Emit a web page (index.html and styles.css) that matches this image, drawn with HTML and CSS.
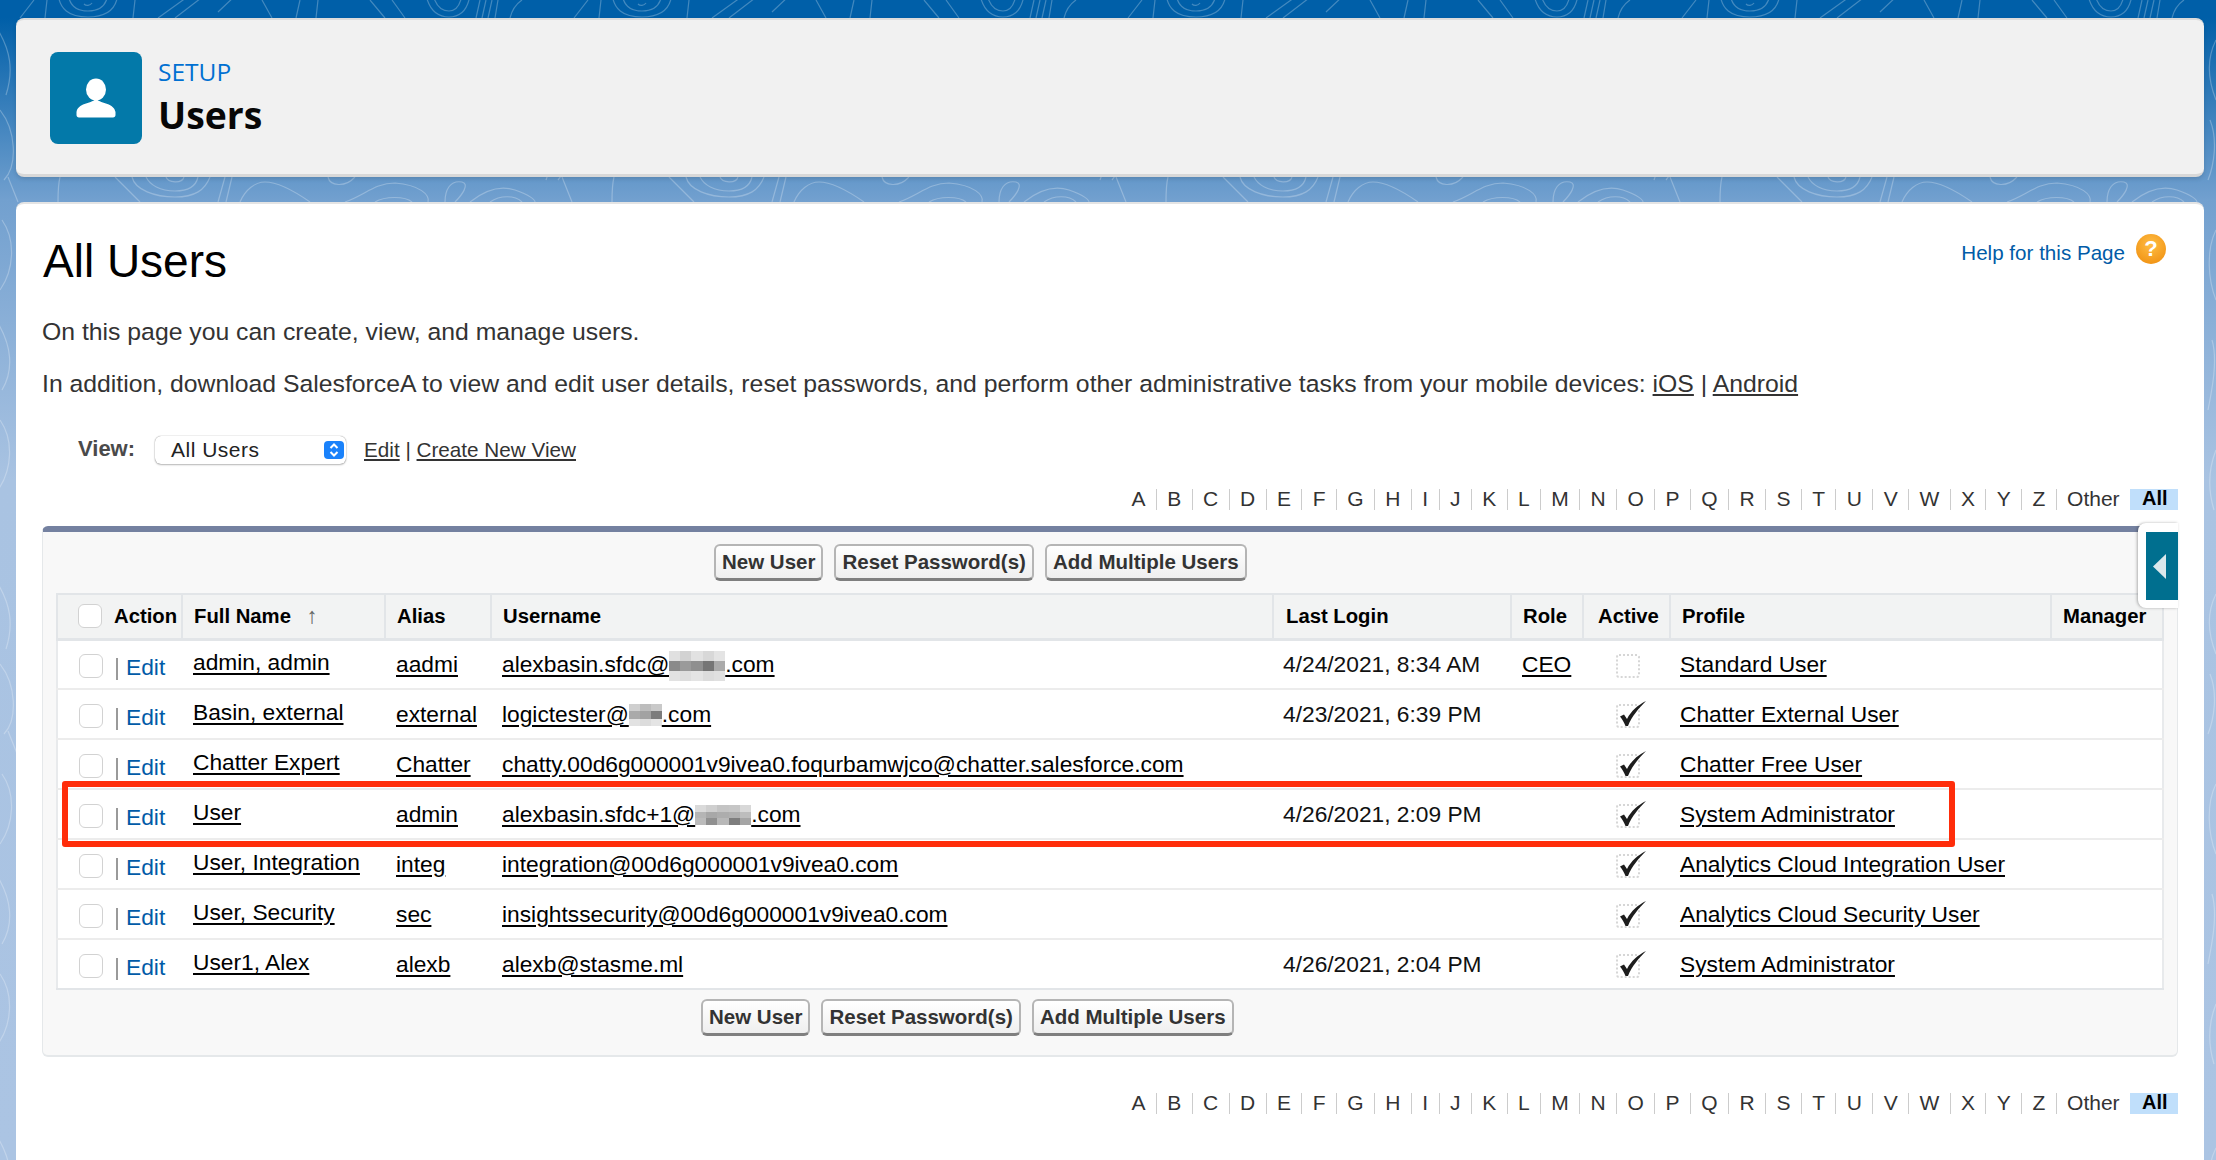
FILE: index.html
```html
<!DOCTYPE html>
<html lang="en">
<head>
    <meta charset="UTF-8" />
    <title>Users - Setup</title>
    <link rel="stylesheet" href="styles.css">
</head>
<body>

<svg class="bg-lines" aria-hidden="true">
    <defs>
        <pattern id="topo" width="554" height="554" patternUnits="userSpaceOnUse">
            <g fill="none" stroke="#fff" stroke-width="1.2">
                <path d="M58 -10C58 10 70 17 88 17C106 17 118 10 118 -10M68 -10C68 5 76 11 88 11C100 11 108 5 108 -10M84 4C86 6 90 6 92 3"/>
                <path d="M135 0L133 18M158 18L190 -5M175 18L205 -5M218 12L236 -5M45 18L47 0M262 0L272 18M300 0L296 18M318 0L316 18"/>
                <path d="M425 -10C428 10 438 17 449 17C462 17 468 8 470 -5M433 -5C436 6 442 11 449 11C456 11 460 6 462 -5M370 0L385 18M392 0L405 18"/>
                <path d="M476 18L480 0M482 18L486 0M488 18L492 0M495 18L498 0M510 18C512 10 516 4 522 0M20 18L34 0"/>
                <path d="M132 177C135 190 155 197 175 197C195 197 205 190 210 177M146 177C150 185 160 191 175 191C188 191 196 186 198 177M166 177C168 183 182 184 184 177"/>
                <path d="M225 177L218 202M232 177L226 202M240 202C245 190 255 182 265 182C280 182 300 195 310 202M60 177C58 185 58 195 58 202"/>
                <path d="M328 177C330 186 345 188 355 177M345 202C365 195 375 183 395 183C420 185 430 195 428 202M375 202C385 196 405 196 412 202"/>
                <path d="M445 202C445 190 450 180 462 182C470 184 462 195 455 202M470 202C485 190 500 185 515 190C530 195 535 200 535 202M490 202C500 195 515 195 522 202M115 177L140 202M8 177L18 202"/>
                <path d="M-2 30C10 50 14 70 6 95M0 110C16 130 18 165 4 180M2 220C16 240 14 270 0 290M-4 320C12 345 14 370 2 390M0 420C14 440 12 470 -2 490"/>
                <path d="M554 40C544 60 546 80 554 100M548 120C556 140 552 165 546 180M554 230C544 250 546 280 554 300M550 340C556 360 550 390 546 410M554 450C546 470 546 490 552 510"/>
            </g>
        </pattern>
        <symbol id="mark-box" viewBox="0 0 32 30">
            <rect x="1" y="6" width="22" height="22" rx="2" fill="none" stroke="#d6d6d6" stroke-width="2" stroke-dasharray="2 2"/>
        </symbol>
        <symbol id="mark-check" viewBox="0 0 32 30">
            <rect x="1" y="6" width="22" height="22" rx="2" fill="none" stroke="#d6d6d6" stroke-width="2" stroke-dasharray="2 2"/>
            <path d="M4 17.5L8 15.5L11 20C15 12 22 6 30 2C23 9 16 17 12 27H9.5C8 23 6 20 4 17.5Z" fill="#1c1c1c"/>
        </symbol>
    </defs>
    <rect width="100%" height="100%" fill="url(#topo)" opacity="0.26"/>
</svg>

<header class="setup-header">
    <div class="setup-icon">
        <svg viewBox="0 0 92 92" width="92" height="92">
            <ellipse cx="46" cy="37.5" rx="10" ry="11" fill="#fff"/>
            <path d="M46 47C52 52 64 51 65.500 60V63C65.500 64.500 64.500 65.500 63 65.500H29C27.500 65.500 26.500 64.500 26.500 63V60C28 51 40 52 46 47Z" fill="#fff"/>
        </svg>
    </div>
    <div class="setup-titles">
        <div class="setup-label">SETUP</div>
        <div class="setup-name">Users</div>
    </div>
</header>

<main class="content">
    <div class="title-row">
        <h1>All Users</h1>
        <div class="help">
            <a href="#">Help for this Page</a>
            <span class="help-icon">?</span>
        </div>
    </div>

    <p class="intro-first">On this page you can create, view, and manage users.</p>
    <p class="intro-second">In addition, download SalesforceA to view and edit user details, reset passwords, and perform other administrative tasks from your mobile devices: <a href="#">iOS</a> | <a href="#">Android</a></p>

    <div class="view-row">
        <label>View:</label>
        <div class="view-select">
            <span>All Users</span>
            <span class="select-arrows">
                <svg viewBox="0 0 20 18" width="20" height="18"><path d="M6.500 7L10 3.500L13.500 7M6.500 11L10 14.500L13.500 11" fill="none" stroke="#fff" stroke-width="2"/></svg>
            </span>
        </div>
        <div class="view-links"><a href="#">Edit</a> | <a href="#">Create New View</a></div>
    </div>

    <div class="alpha alpha-top">
        <a href="#">A</a><a href="#">B</a><a href="#">C</a><a href="#">D</a><a href="#">E</a><a href="#">F</a><a href="#">G</a><a href="#">H</a><a href="#">I</a><a href="#">J</a><a href="#">K</a><a href="#">L</a><a href="#">M</a><a href="#">N</a><a href="#">O</a><a href="#">P</a><a href="#">Q</a><a href="#">R</a><a href="#">S</a><a href="#">T</a><a href="#">U</a><a href="#">V</a><a href="#">W</a><a href="#">X</a><a href="#">Y</a><a href="#">Z</a><a href="#" class="other">Other</a><a href="#" class="all">All</a>
    </div>

    <section class="list-section">
        <div class="list-buttons buttons-top">
            <button>New User</button>
            <button>Reset Password(s)</button>
            <button>Add Multiple Users</button>
        </div>

        <div class="table-wrap">
            <table class="users">
                <colgroup>
                    <col class="c-action"><col class="c-name"><col class="c-alias"><col class="c-username"><col class="c-login"><col class="c-role"><col class="c-active"><col class="c-profile"><col class="c-manager">
                </colgroup>
                <thead>
                    <tr>
                        <th><div class="action-cell"><span class="check"></span><span class="action-label">Action</span></div></th>
                        <th>Full Name <span class="sort-arrow">&#8593;</span></th>
                        <th>Alias</th>
                        <th>Username</th>
                        <th class="login-head">Last Login</th>
                        <th>Role</th>
                        <th class="active-head">Active</th>
                        <th>Profile</th>
                        <th>Manager</th>
                    </tr>
                </thead>
                <tbody>
                    <tr>
                        <td><div class="action-cell"><span class="check"></span><span class="pipe"></span><a class="edit" href="#">Edit</a></div></td>
                        <td class="name"><a href="#">admin, admin</a></td>
                        <td><a href="#">aadmi</a></td>
                        <td class="username"><a href="#">alexbasin.sfdc@<svg class="blur" width="56" height="30" viewBox="0 0 5 3" preserveAspectRatio="none" shape-rendering="crispEdges"><rect width="1" height="1" fill="#e0e0e0"/><rect x="1" width="1" height="1" fill="#d2d2d2"/><rect x="2" width="1" height="1" fill="#e2e2e2"/><rect x="3" width="1" height="1" fill="#d8d8d8"/><rect x="4" width="1" height="1" fill="#e4e4e4"/><rect y="1" width="1" height="1" fill="#8a8a8a"/><rect x="1" y="1" width="1" height="1" fill="#9a9a9a"/><rect x="2" y="1" width="1" height="1" fill="#8f8f8f"/><rect x="3" y="1" width="1" height="1" fill="#757575"/><rect x="4" y="1" width="1" height="1" fill="#aaa"/><rect y="2" width="1" height="1" fill="#e2e2e2"/><rect x="1" y="2" width="1" height="1" fill="#dedede"/><rect x="2" y="2" width="1" height="1" fill="#e4e4e4"/><rect x="3" y="2" width="1" height="1" fill="#dcdcdc"/><rect x="4" y="2" width="1" height="1" fill="#e0e0e0"/></svg>.com</a></td>
                        <td class="login">4/24/2021, 8:34 AM</td>
                        <td><a href="#">CEO</a></td>
                        <td class="active"><svg class="mark"><use href="#mark-box"/></svg></td>
                        <td class="profile"><a href="#">Standard User</a></td>
                        <td></td>
                    </tr>
                    <tr>
                        <td><div class="action-cell"><span class="check"></span><span class="pipe"></span><a class="edit" href="#">Edit</a></div></td>
                        <td class="name"><a href="#">Basin, external</a></td>
                        <td><a href="#">external</a></td>
                        <td class="username"><a href="#">logictester@<svg class="blur" width="33" height="22" viewBox="0 0 3 3" preserveAspectRatio="none" shape-rendering="crispEdges"><rect width="1" height="1" fill="#cfcfcf"/><rect x="1" width="1" height="1" fill="#bdbdbd"/><rect x="2" width="1" height="1" fill="#c9c9c9"/><rect y="1" width="1" height="1" fill="#aaa"/><rect x="1" y="1" width="1" height="1" fill="#a2a2a2"/><rect x="2" y="1" width="1" height="1" fill="#7c7c7c"/><rect y="2" width="1" height="1" fill="#e2e2e2"/><rect x="1" y="2" width="1" height="1" fill="#dcdcdc"/><rect x="2" y="2" width="1" height="1" fill="#e4e4e4"/></svg>.com</a></td>
                        <td class="login">4/23/2021, 6:39 PM</td>
                        <td></td>
                        <td class="active"><svg class="mark"><use href="#mark-check"/></svg></td>
                        <td class="profile"><a href="#">Chatter External User</a></td>
                        <td></td>
                    </tr>
                    <tr>
                        <td><div class="action-cell"><span class="check"></span><span class="pipe"></span><a class="edit" href="#">Edit</a></div></td>
                        <td class="name"><a href="#">Chatter Expert</a></td>
                        <td><a href="#">Chatter</a></td>
                        <td class="username"><a href="#">chatty.00d6g000001v9ivea0.foqurbamwjco@chatter.salesforce.com</a></td>
                        <td></td>
                        <td></td>
                        <td class="active"><svg class="mark"><use href="#mark-check"/></svg></td>
                        <td class="profile"><a href="#">Chatter Free User</a></td>
                        <td></td>
                    </tr>
                    <tr>
                        <td><div class="action-cell"><span class="check"></span><span class="pipe"></span><a class="edit" href="#">Edit</a></div></td>
                        <td class="name"><a href="#">User</a></td>
                        <td><a href="#">admin</a></td>
                        <td class="username"><a href="#">alexbasin.sfdc+1@<svg class="blur" width="56" height="20" viewBox="0 0 5 3" preserveAspectRatio="none" shape-rendering="crispEdges"><rect width="1" height="1" fill="#dadada"/><rect x="1" width="1" height="1" fill="#cfcfcf"/><rect x="2" width="1" height="1" fill="#c4c4c4"/><rect x="3" width="1" height="1" fill="#c6c6c6"/><rect x="4" width="1" height="1" fill="#d8d8d8"/><rect y="1" width="1" height="1" fill="#b5b5b5"/><rect x="1" y="1" width="1" height="1" fill="#a8a8a8"/><rect x="2" y="1" width="1" height="1" fill="#adadad"/><rect x="3" y="1" width="1" height="1" fill="#b0b0b0"/><rect x="4" y="1" width="1" height="1" fill="#bdbdbd"/><rect y="2" width="1" height="1" fill="#bbb"/><rect x="1" y="2" width="1" height="1" fill="#909090"/><rect x="2" y="2" width="1" height="1" fill="#b8b8b8"/><rect x="3" y="2" width="1" height="1" fill="#7e7e7e"/><rect x="4" y="2" width="1" height="1" fill="#a5a5a5"/></svg>.com</a></td>
                        <td class="login">4/26/2021, 2:09 PM</td>
                        <td></td>
                        <td class="active"><svg class="mark"><use href="#mark-check"/></svg></td>
                        <td class="profile"><a href="#">System Administrator</a></td>
                        <td></td>
                    </tr>
                    <tr>
                        <td><div class="action-cell"><span class="check"></span><span class="pipe"></span><a class="edit" href="#">Edit</a></div></td>
                        <td class="name"><a href="#">User, Integration</a></td>
                        <td><a href="#">integ</a></td>
                        <td class="username"><a href="#">integration@00d6g000001v9ivea0.com</a></td>
                        <td></td>
                        <td></td>
                        <td class="active"><svg class="mark"><use href="#mark-check"/></svg></td>
                        <td class="profile"><a href="#">Analytics Cloud Integration User</a></td>
                        <td></td>
                    </tr>
                    <tr>
                        <td><div class="action-cell"><span class="check"></span><span class="pipe"></span><a class="edit" href="#">Edit</a></div></td>
                        <td class="name"><a href="#">User, Security</a></td>
                        <td><a href="#">sec</a></td>
                        <td class="username"><a href="#">insightssecurity@00d6g000001v9ivea0.com</a></td>
                        <td></td>
                        <td></td>
                        <td class="active"><svg class="mark"><use href="#mark-check"/></svg></td>
                        <td class="profile"><a href="#">Analytics Cloud Security User</a></td>
                        <td></td>
                    </tr>
                    <tr>
                        <td><div class="action-cell"><span class="check"></span><span class="pipe"></span><a class="edit" href="#">Edit</a></div></td>
                        <td class="name"><a href="#">User1, Alex</a></td>
                        <td><a href="#">alexb</a></td>
                        <td class="username"><a href="#">alexb@stasme.ml</a></td>
                        <td class="login">4/26/2021, 2:04 PM</td>
                        <td></td>
                        <td class="active"><svg class="mark"><use href="#mark-check"/></svg></td>
                        <td class="profile"><a href="#">System Administrator</a></td>
                        <td></td>
                    </tr>
                </tbody>
            </table>
            <div class="red-box"></div>
        </div>

        <div class="list-buttons buttons-bottom">
            <button>New User</button>
            <button>Reset Password(s)</button>
            <button>Add Multiple Users</button>
        </div>

        <div class="side-handle">
            <div class="side-handle-inner">
                <svg viewBox="0 0 13 25" width="13" height="25"><path d="M13 0V25L0 12.500Z" fill="#dbe8ec"/></svg>
            </div>
        </div>
    </section>

    <div class="alpha alpha-bottom">
        <a href="#">A</a><a href="#">B</a><a href="#">C</a><a href="#">D</a><a href="#">E</a><a href="#">F</a><a href="#">G</a><a href="#">H</a><a href="#">I</a><a href="#">J</a><a href="#">K</a><a href="#">L</a><a href="#">M</a><a href="#">N</a><a href="#">O</a><a href="#">P</a><a href="#">Q</a><a href="#">R</a><a href="#">S</a><a href="#">T</a><a href="#">U</a><a href="#">V</a><a href="#">W</a><a href="#">X</a><a href="#">Y</a><a href="#">Z</a><a href="#" class="other">Other</a><a href="#" class="all">All</a>
    </div>
</main>

</body>
</html>
```

FILE: styles.css
```css
html, body {
    height: 1160px;
    overflow: hidden;
}
body {
    margin: 0;
    padding: 18px 12px 0 16px;
    box-sizing: border-box;
    position: relative;
    font-family: "Liberation Sans", Arial, sans-serif;
    color: #222;
    background: linear-gradient(to bottom, #005fa8 0, #005fa8 18px, #72a0cf 200px, #a9c3e2 480px, #abc4e3 100%);
}
a {
    color: inherit;
}

.bg-lines {
    position: absolute;
    left: 0;
    top: 0;
    width: 100%;
    height: 100%;
}

/* top card */
.setup-header {
    position: relative;
    height: 159px;
    box-sizing: border-box;
    padding: 32px 34px;
    display: flex;
    gap: 16px;
    background: #f1f1f1;
    border-top: 2px solid #dcdcdc;
    border-bottom: 3px solid #d8d8d8;
    border-radius: 8px;
    box-shadow: 0 2px 4px rgba(0, 0, 0, 0.12);
}
.setup-icon {
    width: 92px;
    height: 92px;
    background: #0379a9;
    border-radius: 8px;
}
.setup-label {
    font-family: "Open Sans", sans-serif;
    font-size: 24.5px;
    line-height: 32px;
    margin-top: 4px;
    color: #0070d2;
}
.setup-name {
    font-family: "Open Sans", sans-serif;
    font-weight: 700;
    font-size: 37.3px;
    line-height: 50px;
    margin-top: 2px;
    color: #080707;
}

/* main card */
.content {
    position: relative;
    margin-top: 25px;
    height: 960px;
    box-sizing: border-box;
    padding: 29px 26px 0 26px;
    background: #fff;
    border-top: 2px solid #e4e4e4;
    border-radius: 8px 8px 0 0;
}
.title-row {
    display: flex;
    justify-content: space-between;
    height: 54px;
}
h1 {
    margin: 0 0 0 1px;
    font-size: 46px;
    font-weight: normal;
    line-height: 56px;
    color: #000;
}
.help {
    display: flex;
    align-items: center;
    gap: 11px;
    height: 30px;
    margin: 1px 12px 0 0;
    font-size: 20.6px;
}
.help a {
    color: #015ba7;
    text-decoration: none;
    padding-top: 8px;
}
.help-icon {
    width: 30px;
    height: 30px;
    border-radius: 50%;
    background: radial-gradient(circle at 50% 35%, #ffbe45, #ee8a0a);
    color: #fff;
    font-weight: bold;
    font-size: 22px;
    line-height: 30px;
    text-align: center;
}
p {
    margin: 0;
    font-size: 24.78px;
    line-height: 30px;
    color: #333;
}
.intro-first {
    margin-top: 30px;
}
.intro-second {
    margin-top: 22px;
}

.view-row {
    display: flex;
    align-items: center;
    height: 30px;
    margin: 36px 0 0 36px;
}
.view-row label {
    width: 77px;
    font-size: 22px;
    font-weight: bold;
    color: #4a4a4a;
    padding-bottom: 3px;
}
.view-select {
    width: 191px;
    height: 28px;
    box-sizing: border-box;
    display: flex;
    align-items: center;
    justify-content: space-between;
    padding: 0 2px 0 16px;
    background: #fff;
    border-radius: 6px;
    box-shadow: 0 0 1px rgba(0, 0, 0, 0.5), 0 1px 2px rgba(0, 0, 0, 0.25);
    font-size: 21px;
    letter-spacing: 0.5px;
    color: #222;
}
.select-arrows {
    display: flex;
    width: 20px;
    height: 18px;
    background: #1a82fb;
    border-radius: 4px;
}
.view-links {
    margin-left: 18px;
    font-size: 20.7px;
    color: #333;
}

.alpha {
    display: flex;
    justify-content: flex-end;
    height: 21px;
    font-size: 21px;
    line-height: 19px;
    color: #333;
}
.alpha a {
    padding: 0 10.38px;
    border-right: 1px solid #ccc;
    text-decoration: none;
}
.alpha .other {
    border-right: none;
}
.alpha .all {
    width: 48px;
    box-sizing: border-box;
    padding: 0 0 0 12px;
    border-right: none;
    background: #c0dffb;
    font-size: 20px;
    font-weight: bold;
    color: #000;
}
.alpha-top {
    margin-top: 24px;
}
.alpha-bottom {
    margin-top: 36px;
}

/* list */
.list-section {
    position: relative;
    margin-top: 16px;
    height: 531px;
    box-sizing: border-box;
    padding: 0 14px 0 13px;
    background: #f8f8f8;
    border: 1px solid #e5e8ea;
    border-top: 6px solid #7481a0;
    border-bottom-width: 2px;
    border-radius: 6px;
}
.list-buttons {
    display: flex;
    gap: 11px;
}
.buttons-top {
    padding: 12px 0 12px 658px;
}
.buttons-bottom {
    padding: 9px 0 0 645px;
}
button {
    height: 37px;
    padding: 0 6px;
    font-family: "Liberation Sans", Arial, sans-serif;
    font-size: 20.5px;
    font-weight: bold;
    color: #333;
    background: linear-gradient(to bottom, #fff, #efefef);
    border: 2px solid #b5b5b5;
    border-bottom: 3px solid #7f7f7f;
    border-radius: 6px;
    cursor: pointer;
}

.table-wrap {
    position: relative;
}
table.users {
    width: 2106px;
    table-layout: fixed;
    border-collapse: collapse;
    background: #fff;
    font-size: 22.75px;
    color: #111;
}
.c-action { width: 125px; }
.c-name { width: 203px; }
.c-alias { width: 106px; }
.c-username { width: 782px; }
.c-login { width: 238px; }
.c-role { width: 72px; }
.c-active { width: 87px; }
.c-profile { width: 381px; }
.c-manager { width: 112px; }

th {
    height: 45px;
    padding: 0 0 0 11px;
    box-sizing: border-box;
    background: #f2f3f3;
    border: 2px solid #e2e5e8;
    border-bottom-width: 3px;
    text-align: left;
    font-size: 20.3px;
    color: #000;
}
th.login-head {
    padding-left: 12px;
}
th.active-head {
    padding-left: 14px;
}
th:first-child {
    padding-left: 20px;
}
td:first-child {
    padding: 4px 0 0 21px;
}
td {
    height: 50px;
    padding: 0 0 0 11px;
    box-sizing: border-box;
    border-bottom: 2px solid #ececec;
    white-space: nowrap;
}
tbody tr:last-child td {
    border-bottom-color: #e2e5e8;
}
td:first-child {
    border-left: 2px solid #e8eaec;
}
td:last-child {
    border-right: 2px solid #e8eaec;
}
td a {
    color: #000;
    text-decoration-thickness: 2px;
    text-underline-offset: 3px;
}
td.name {
    padding-bottom: 4px;
}
td.login {
    padding-left: 10px;
}
td.profile {
    padding-left: 10px;
}
td.active {
    padding-left: 33px;
}
.sort-arrow {
    margin-left: 10px;
    font-size: 22px;
    font-weight: bold;
    color: #666;
}
.action-cell {
    display: flex;
    align-items: center;
    height: 32px;
}
.check {
    width: 24px;
    height: 24px;
    box-sizing: border-box;
    background: #fff;
    border: 1.5px solid #d2d2d2;
    border-radius: 6px;
    flex: none;
}
.action-label {
    margin-left: 12px;
}
.pipe {
    width: 2px;
    height: 22px;
    margin: 6px 8px 0 13px;
    background: #9a9a9a;
    flex: none;
}
a.edit {
    margin-top: 2px;
    font-size: 22.75px;
    color: #015ba7;
    text-decoration: none;
}
.mark {
    display: block;
    width: 32px;
    height: 30px;
    filter: blur(0.4px);
}
.blur {
    vertical-align: middle;
    margin: -6px 0;
}
.red-box {
    position: absolute;
    left: 6px;
    top: 188px;
    width: 1893px;
    height: 66px;
    box-sizing: border-box;
    border: 6px solid #ff2d0a;
    border-radius: 3px;
}

.side-handle {
    position: absolute;
    right: -1px;
    top: -9px;
    width: 40px;
    height: 85px;
    box-sizing: border-box;
    padding: 9px 0 8px 8px;
    background: #fff;
    border-radius: 8px 0 0 8px;
    box-shadow: -1px 0 3px rgba(0, 0, 0, 0.3);
}
.side-handle-inner {
    display: flex;
    align-items: center;
    height: 100%;
    padding-left: 7px;
    box-sizing: border-box;
    background: #006f8f;
}
```
